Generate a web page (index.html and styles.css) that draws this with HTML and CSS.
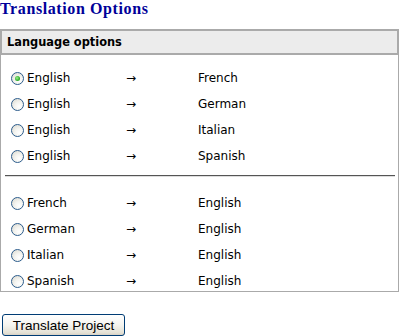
FILE: index.html
```html
<!DOCTYPE html>
<html lang="en">
<head>
    <meta charset="UTF-8">
    <meta name="viewport" content="width=device-width, initial-scale=1.0">
    <title>Translation Options</title>
    <link rel="stylesheet" href="styles.css">
</head>
<body>
    <h1 class="pageTitle">Translation Options</h1>

    <div class="optionsBox">
        <div class="optionsHeader">Language options</div>

        <div class="optionsGroup">
            <label class="optionRow">
                <span class="source"><input type="radio" name="langPair" value="en-fr" checked>English</span>
                <span class="arrow">&rarr;</span>
                <span class="target">French</span>
            </label>
            <label class="optionRow">
                <span class="source"><input type="radio" name="langPair" value="en-de">English</span>
                <span class="arrow">&rarr;</span>
                <span class="target">German</span>
            </label>
            <label class="optionRow">
                <span class="source"><input type="radio" name="langPair" value="en-it">English</span>
                <span class="arrow">&rarr;</span>
                <span class="target">Italian</span>
            </label>
            <label class="optionRow">
                <span class="source"><input type="radio" name="langPair" value="en-es">English</span>
                <span class="arrow">&rarr;</span>
                <span class="target">Spanish</span>
            </label>
        </div>

        <hr class="groupDivider">

        <div class="optionsGroup">
            <label class="optionRow">
                <span class="source"><input type="radio" name="langPair" value="fr-en">French</span>
                <span class="arrow">&rarr;</span>
                <span class="target">English</span>
            </label>
            <label class="optionRow">
                <span class="source"><input type="radio" name="langPair" value="de-en">German</span>
                <span class="arrow">&rarr;</span>
                <span class="target">English</span>
            </label>
            <label class="optionRow">
                <span class="source"><input type="radio" name="langPair" value="it-en">Italian</span>
                <span class="arrow">&rarr;</span>
                <span class="target">English</span>
            </label>
            <label class="optionRow">
                <span class="source"><input type="radio" name="langPair" value="es-en">Spanish</span>
                <span class="arrow">&rarr;</span>
                <span class="target">English</span>
            </label>
        </div>
    </div>

    <button type="button" class="btnTranslate">Translate Project</button>
</body>
</html>
```

FILE: styles.css
```css
body {
    margin: 0;
    padding: 0;
    background-color: #fff;
    font-family: "DejaVu Sans", Verdana, sans-serif;
    font-size: 12px;
    color: #000;
}
.pageTitle {
    margin: 0 0 12px 0;
    height: 17px;
    line-height: 17px;
    font-family: "Liberation Serif", "Times New Roman", serif;
    font-size: 16px;
    font-weight: bold;
    letter-spacing: 0.6px;
    color: #000099;
}
.optionsBox {
    width: 399px;
    box-sizing: border-box;
    border: 1px solid #aaa;
    border-top: none;
}
.optionsHeader {
    margin: 0 -1px;
    height: 22px;
    line-height: 22px;
    padding-left: 5px;
    border: 2px solid #aaa;
    background-color: #ececec;
    font-weight: bold;
    font-size: 11.4px;
}
.optionsGroup {
    display: flex;
    flex-direction: column;
    gap: 4px;
    padding-top: 12px;
}
.optionsGroup + .groupDivider + .optionsGroup {
    padding-top: 0;
    margin-bottom: -1px;
}
.optionRow {
    display: grid;
    grid-template-columns: 115px 72px 1fr;
    align-items: center;
    height: 22px;
    padding-left: 10px;
    cursor: pointer;
}
.source {
    display: flex;
    align-items: center;
    gap: 3px;
}
.arrow {
    font-size: 12px;
}
input[type="radio"] {
    appearance: none;
    -webkit-appearance: none;
    margin: 0;
    width: 13px;
    height: 13px;
    box-sizing: border-box;
    border: 1px solid #2c5c8c;
    border-radius: 50%;
    background: radial-gradient(circle at 65% 70%, #fff 0%, #f4f4f0 40%, #d8d6cc 100%);
    position: relative;
}
input[type="radio"]:checked::after {
    content: "";
    position: absolute;
    left: 3px;
    top: 3px;
    width: 5px;
    height: 5px;
    border-radius: 50%;
    background: radial-gradient(circle at 40% 40%, #9ef08f 0%, #2fae2b 60%, #21a121 100%);
}
.groupDivider {
    margin: 8px 3px 15px 4px;
    height: 0;
    border: none;
    border-top: 1px solid #555;
    border-bottom: 1px solid #ddd;
}
.btnTranslate {
    display: block;
    margin: 22px 0 0 2px;
    width: 123px;
    height: 22px;
    padding: 0;
    border: 1px solid #003c74;
    border-radius: 3px;
    background: linear-gradient(#fff 0%, #f5f4ef 50%, #e3e0d4 90%, #d6d0c5 100%);
    font-family: "Liberation Sans", Arial, sans-serif;
    font-size: 13.5px;
    color: #000;
    cursor: pointer;
}
```
